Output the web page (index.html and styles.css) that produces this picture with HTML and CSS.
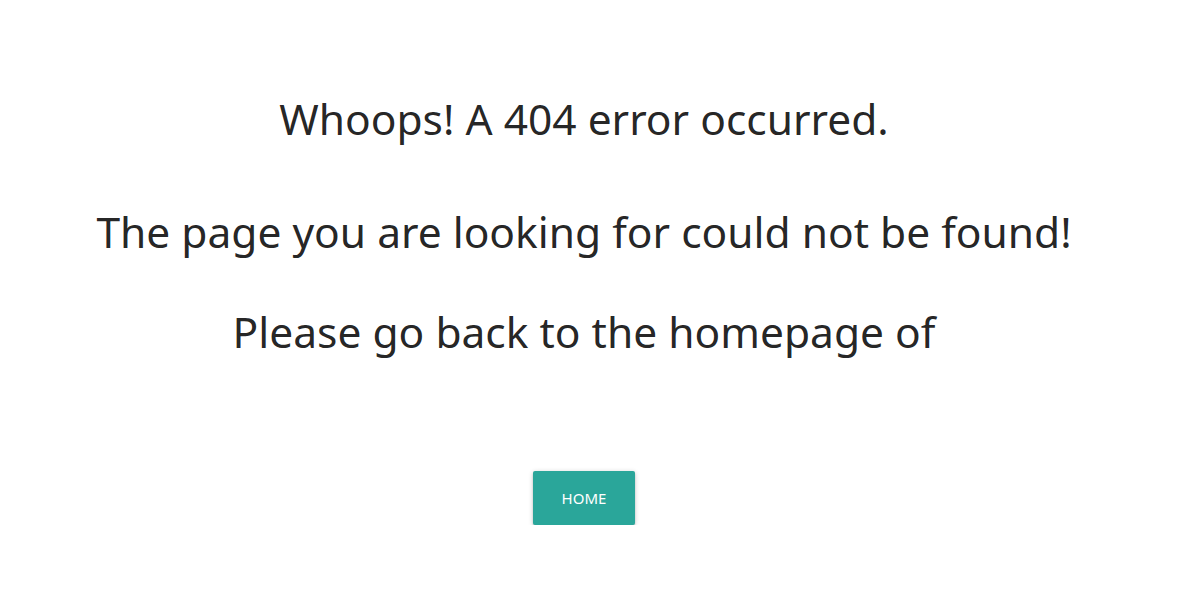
FILE: index.html
```html
<!DOCTYPE html>
<html lang="en">
<head>
<meta charset="utf-8">
<title>404</title>
<link rel="stylesheet" href="styles.css">
</head>
<body>
<main class="page">
  <h3 class="title">Whoops! A 404 error occurred.</h3>
  <h3 class="message">The page you are looking for could not be found!</h3>
  <h3 class="message message-last">Please go back to the homepage of</h3>
  <div class="actions">
    <a class="btn-large" href="#">Home</a>
  </div>
</main>
</body>
</html>
```
FILE: styles.css
```css
html, body {
  margin: 0;
  padding: 0;
  background: #ffffff;
}
body {
  font-family: "Noto Sans", "Open Sans", sans-serif;
  color: rgba(0, 0, 0, 0.87);
}
.page {
  padding: 93px 32px 0 0;
  text-align: center;
}
.title,
.message {
  margin: 0;
  font-size: 42.5px;
  font-weight: 400;
  line-height: 51px;
}
.message {
  margin-top: 62px;
}
.message-last {
  margin-top: 49px;
}
.actions {
  margin-top: 114px;
  display: flex;
  justify-content: center;
}
.btn-large {
  display: inline-block;
  box-sizing: border-box;
  width: 102px;
  height: 54px;
  line-height: 54px;
  padding: 0;
  text-align: center;
  font-size: 15px;
  letter-spacing: 0;
  text-transform: uppercase;
  text-decoration: none;
  color: #ffffff;
  background-color: #2aa69a;
  border-radius: 2px;
  box-shadow: 0 2px 2px 0 rgba(0, 0, 0, 0.14), 0 3px 1px -2px rgba(0, 0, 0, 0.12), 0 1px 5px 0 rgba(0, 0, 0, 0.2);
}
```
